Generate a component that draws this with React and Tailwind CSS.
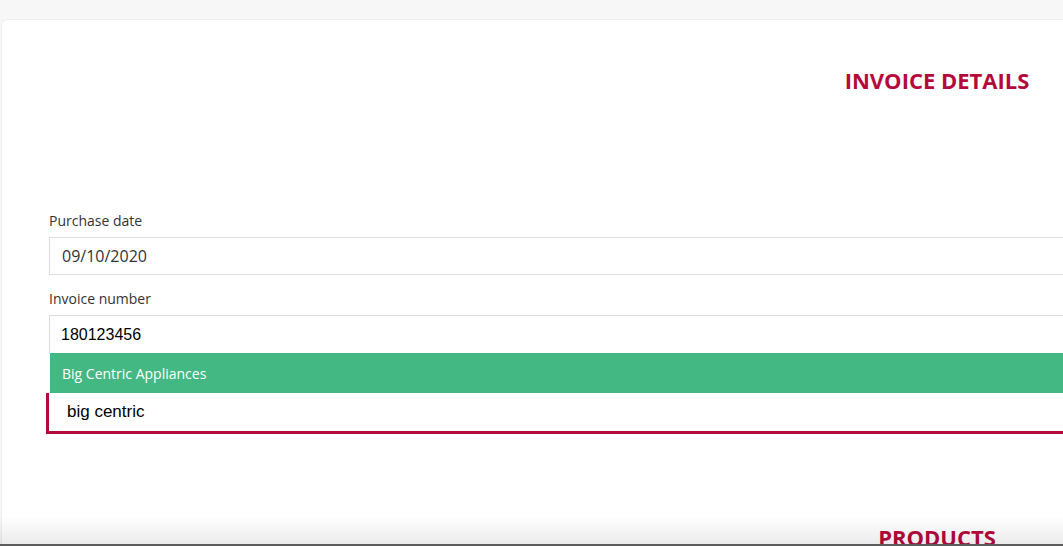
export default function App() {
  return (
    <div
      className="relative h-[546px] w-full overflow-hidden bg-[#f7f7f7] pl-[1px] pt-[19px]"
      style={{ fontFamily: '"Open Sans", "Noto Sans", sans-serif' }}
    >
      {/* Card */}
      <div className="h-[600px] w-[1871px] rounded-tl-[6px] border-l border-t border-[#efefef] bg-white pt-[45px]">
        <h2 className="text-center text-[22px] font-bold leading-[30px] text-[#b5093c]">
          INVOICE DETAILS
        </h2>

        <div className="mt-[116px] pl-[47px]">
          {/* Purchase date */}
          <label className="mb-[6px] block text-[14px] leading-[20px] text-[#333]">
            Purchase date
          </label>
          <div className="flex h-[38px] items-center border border-[#dcdcdc] pl-[12px] text-[16px] text-[#333]">
            09/10/2020
          </div>

          {/* Invoice number */}
          <label className="mb-[6px] mt-[14px] block text-[14px] leading-[20px] text-[#333]">
            Invoice number
          </label>
          <div
            className="flex h-[38px] items-center border border-b-0 border-[#dcdcdc] pl-[11px] text-[16px] text-black"
            style={{ fontFamily: '"Liberation Sans", Arial, sans-serif' }}
          >
            180123456
          </div>

          {/* Autocomplete suggestion */}
          <div className="ml-[1px] flex h-[40px] items-center bg-[#43b883] pl-[12px] text-[14px] text-white">
            Big Centric Appliances
          </div>

          {/* Dealer search */}
          <div
            className="-ml-[3px] flex h-[41px] items-center border-b-[3px] border-l-[3px] border-[#b5093c] pl-[18px] text-[17px] text-black"
            style={{ fontFamily: '"Liberation Sans", Arial, sans-serif' }}
          >
            big centric
          </div>
        </div>

        <h2 className="mt-[88px] text-center text-[22px] font-bold leading-[30px] text-[#b5093c]">
          PRODUCTS
        </h2>
      </div>

      {/* bottom fade */}
      <div className="pointer-events-none absolute bottom-0 left-0 right-0 h-[30px] border-b-2 border-[#5c5c5c] bg-gradient-to-b from-transparent to-[#00000014]" />
    </div>
  );
}
